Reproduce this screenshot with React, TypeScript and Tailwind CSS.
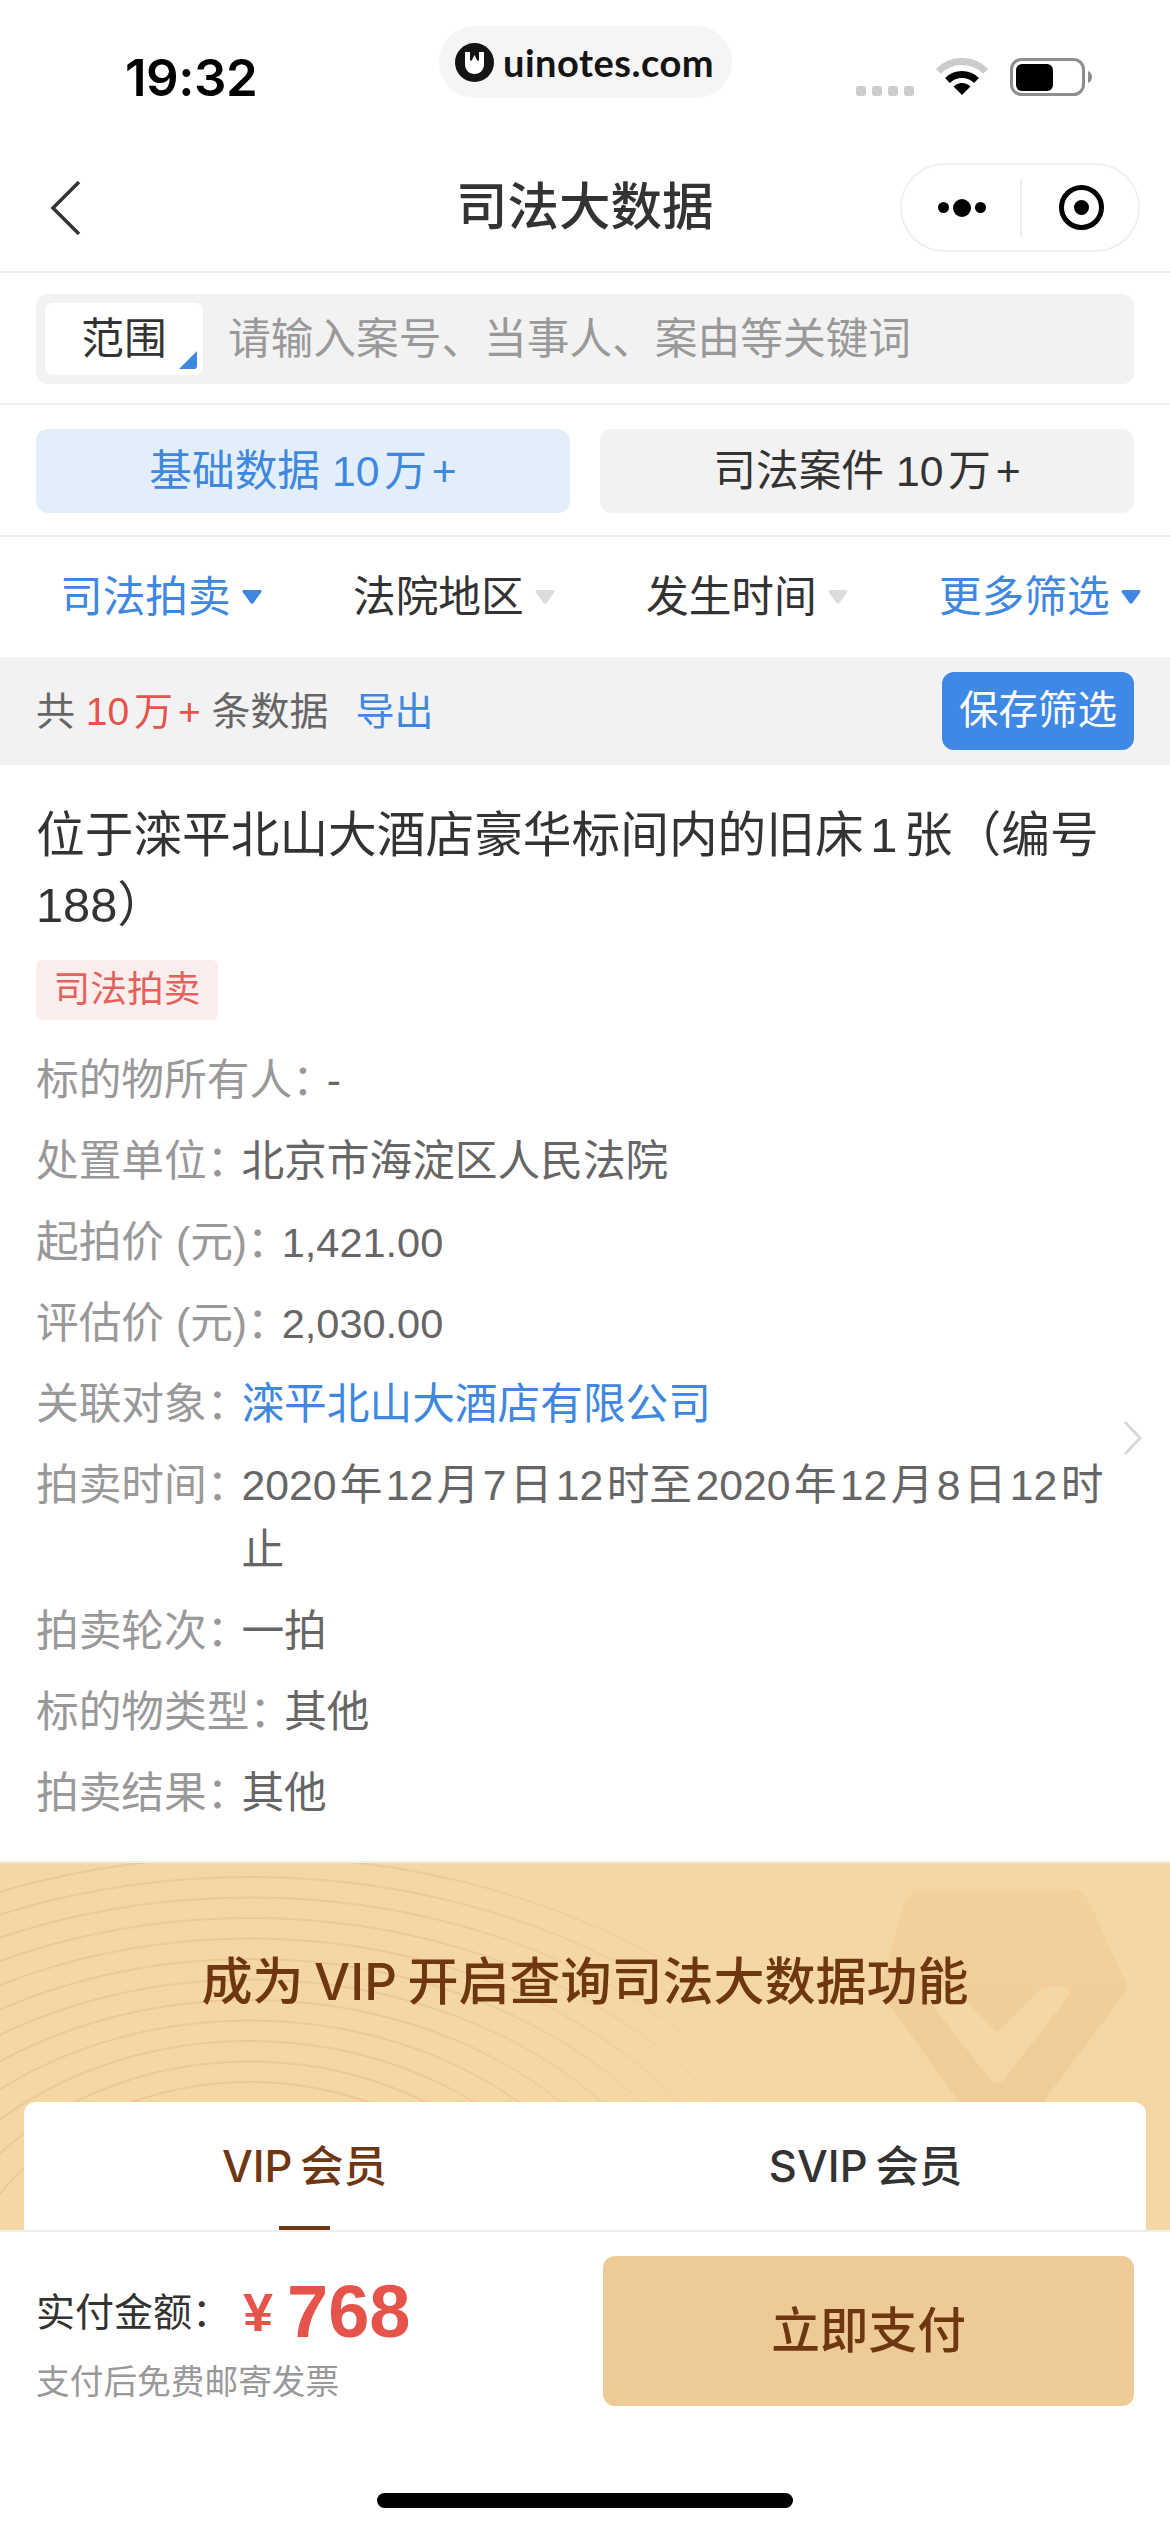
const rows: { label: string; value: string; blue?: boolean; tight?: boolean; price?: boolean }[] = [
  { label: '标的物所有人', value: '-' },
  { label: '处置单位', value: '北京市海淀区人民法院' },
  { label: '起拍价 (元)', value: '1,421.00', price: true },
  { label: '评估价 (元)', value: '2,030.00', price: true },
  { label: '关联对象', value: '滦平北山大酒店有限公司', blue: true },
  { label: '拍卖时间', value: '2020 年 12 月 7 日 12 时至 2020 年 12 月 8 日 12 时止', tight: true },
  { label: '拍卖轮次', value: '一拍' },
  { label: '标的物类型', value: '其他' },
  { label: '拍卖结果', value: '其他' },
]

const filters = [
  { name: '司法拍卖', active: true },
  { name: '法院地区', active: false },
  { name: '发生时间', active: false },
  { name: '更多筛选', active: true },
]

// wood-grain lines behind the VIP heading, flatter toward the top
const rings = Array.from({ length: 12 }, (_, i) => {
  const ry = 250 + i * 20.5
  return { ry, rx: 300 + (ry - 250) * 1.6 }
})

function Wifi() {
  return (
    <svg width="52" height="38" viewBox="0 0 52 38">
      <path d="M2.3 13.3A33.5 33.5 0 0 1 49.7 13.3" fill="none" stroke="#cccccc" strokeWidth="7" />
      <path d="M11.5 22.5A20.5 20.5 0 0 1 40.5 22.5" fill="none" stroke="#000" strokeWidth="7" />
      <path d="M26 37L17.5 28.5A12 12 0 0 1 34.5 28.5Z" fill="#000" />
    </svg>
  )
}

function Battery() {
  return (
    <svg width="83" height="38" viewBox="0 0 83 38">
      <rect x="1.5" y="1.5" width="72" height="35" rx="10" fill="none" stroke="#8e8e8e" strokeWidth="3" />
      <rect x="6" y="6" width="37" height="27" rx="6" fill="#000" />
      <path d="M78 13C81 14 82 16.500 82 19C82 21.500 81 24 78 25Z" fill="#8e8e8e" />
    </svg>
  )
}

function Logo() {
  return (
    <svg width="39" height="39" viewBox="0 0 39 39">
      <circle cx="19.500" cy="19.500" r="19.500" fill="#141414" />
      <path d="M10 9H15V17C15 18 16.500 18 17 17L19.500 12L22 17C22.500 18 24 18 24 17V9H29V21C29 27 25 31 19.500 31C14 31 10 27 10 21Z" fill="#fff" />
    </svg>
  )
}

function Triangle({ active }: { active: boolean }) {
  return (
    <svg className="shrink-0" width="20" height="14" viewBox="0 0 20 14">
      <path d="M2 0H18C19.500 0 20 1 19.200 2.200L11.500 13C10.700 14 9.300 14 8.500 13L0.800 2.200C0 1 0.500 0 2 0Z" fill={active ? '#4087e0' : '#dcdcdc'} />
    </svg>
  )
}

export default function App() {
  return (
    <div className="w-[1170px] h-[2532px] flex flex-col overflow-hidden bg-white font-['Liberation_Sans','Noto_Sans_CJK_SC',sans-serif] text-[#333333]">
      <div className="h-[144px] flex items-start shrink-0">
        <div className="w-[439px] pl-[125px] pt-[50px] font-['Inter'] text-[51px] leading-[56px] font-semibold tracking-[-0.5px] text-black">19:32</div>
        <div className="mt-[26px] w-[293px] h-[72px] rounded-[36px] bg-[#f5f5f5] flex items-center pl-[16px] gap-[9px]">
          <Logo />
          <span className="font-['Lato'] text-[38px] font-bold leading-none text-[#141414] tracking-[0.5px]">uinotes.com</span>
        </div>
        <div className="flex items-end pt-[58px] pl-[124px]">
          <div className="flex gap-[6px]">
            {[0, 1, 2, 3].map(i => <div key={i} className="w-[10px] h-[10px] rounded-[3px] bg-[#cccccc]" />)}
          </div>
          <div className="ml-[22px]"><Wifi /></div>
          <div className="ml-[22px]"><Battery /></div>
        </div>
      </div>

      <div className="h-[129px] shrink-0 border-b-2 border-[#eeeeee] flex items-center pl-[48px] pr-[30px]">
        <svg width="34" height="56" viewBox="0 0 34 56">
          <path d="M31 2L5 28L31 54" fill="none" stroke="#333" strokeWidth="3.500" />
        </svg>
        <h1 className="ml-[374px] text-[51.500px] leading-none font-medium text-[#333333]">司法大数据</h1>
        <div className="ml-auto w-[240px] h-[89px] rounded-[45px] border-2 border-[#f0f0f0] flex items-center">
          <div className="w-[120px] h-[60px] border-r-2 border-[#f0f0f0] flex items-center justify-center gap-[4px] pl-[2px]">
            <div className="w-[11px] h-[11px] rounded-full bg-black" />
            <div className="w-[18px] h-[18px] rounded-full bg-black" />
            <div className="w-[11px] h-[11px] rounded-full bg-black" />
          </div>
          <div className="flex-1 flex items-center justify-center pl-[2px]">
            <div className="w-[45px] h-[45px] rounded-full border-[5px] border-black flex items-center justify-center">
              <div className="w-[15px] h-[15px] rounded-full bg-black" />
            </div>
          </div>
        </div>
      </div>

      <div className="shrink-0 px-[36px] pt-[21px] pb-[19px] border-b-2 border-[#eeeeee]">
        <div className="h-[90px] rounded-[12px] bg-[#f2f2f2] flex items-center pl-[9px]">
          <div className="relative w-[158px] h-[72px] rounded-[8px] bg-white flex items-center justify-center text-[42.700px] leading-none text-[#333333]">
            范围
            <svg className="absolute right-[6px] bottom-[6px]" width="18" height="18" viewBox="0 0 18 18">
              <path d="M18 0V15C18 17 17 18 15 18H0Z" fill="#4087e0" />
            </svg>
          </div>
          <span className="ml-[25px] text-[42.700px] leading-none text-[#999999]">请输入案号、当事人、案由等关键词</span>
        </div>
      </div>

      <div className="shrink-0 px-[36px] pt-[24px] pb-[22px] border-b-2 border-[#eeeeee] grid grid-cols-2 gap-[30px]">
        <div className="h-[84px] rounded-[12px] bg-[#e2effa] text-[#4087e0] flex items-center justify-center text-[42.700px] leading-none">
          <span>基础数据 <span className="[word-spacing:-7px]">10 万 +</span></span>
        </div>
        <div className="h-[84px] rounded-[12px] bg-[#f2f2f2] text-[#333333] flex items-center justify-center text-[42.700px] leading-none">
          <span>司法案件 <span className="[word-spacing:-7px]">10 万 +</span></span>
        </div>
      </div>

      <div className="h-[120px] shrink-0 flex items-center pl-[60px] gap-[90px]">
        {filters.map(f => (
          <div key={f.name} className={`flex items-center gap-[11px] w-[203px] shrink-0 text-[42.700px] leading-none whitespace-nowrap ${f.active ? 'text-[#4087e0]' : 'text-[#333333]'}`}>
            <span>{f.name}</span>
            <Triangle active={f.active} />
          </div>
        ))}
      </div>

      <div className="h-[108px] shrink-0 bg-[#f2f2f2] flex items-center justify-between pl-[36px] pr-[36px]">
        <div className="text-[39px] leading-none text-[#666666]">
          共 <span className="text-[#e5534b] [word-spacing:-6px]">10 万 +</span> 条数据
          <span className="text-[#4087e0] ml-[27px]">导出</span>
        </div>
        <div className="w-[192px] h-[78px] rounded-[12px] bg-[#4088e5] text-white text-[39.500px] leading-none flex items-center justify-center">保存筛选</div>
      </div>

      <div className="flex-1 min-h-0 overflow-hidden">
        <div className="relative px-[36px] pt-[35px] pb-[35px]">
          <h2 className="text-[48.700px] leading-[70px] text-[#333333] font-normal [word-spacing:-7px]">位于滦平北山大酒店豪华标间内的旧床 1 张（编号188）</h2>
          <div className="mt-[20px] w-[182px] h-[60px] rounded-[6px] bg-[#fdeeee] text-[#e5625c] text-[36.700px] leading-none flex items-center justify-center">司法拍卖</div>
          <div className="mt-[28px] flex flex-col gap-[16px]">
            {rows.map(r => (
              <div key={r.label} className="flex text-[42.700px] leading-[65px]">
                <span className="shrink-0 text-[#999999] whitespace-nowrap">{r.label}<span className="tracking-[-8px]">：</span></span>
                <span className={`${r.blue ? 'text-[#4087e0]' : 'text-[#666666]'} ${r.tight ? '[word-spacing:-8.500px]' : ''} ${r.price ? 'text-[41.500px]' : ''}`}>{r.value}</span>
              </div>
            ))}
          </div>
          <svg className="absolute right-[27px] top-[655px]" width="20" height="36" viewBox="0 0 20 36">
            <path d="M2 2L17 18L2 34" fill="none" stroke="#d8d8d8" strokeWidth="3" />
          </svg>
        </div>

        <div className="relative border-t-2 border-[#eeeeee] bg-[#f5d6a5] pt-[84px] pb-[40px] overflow-hidden">
          <svg className="absolute left-0 top-0" width="1170" height="500" viewBox="0 0 1170 500">
            <defs>
              <linearGradient id="ringFade" gradientUnits="userSpaceOnUse" x1="420" y1="0" x2="770" y2="0">
                <stop offset="0" stopColor="#e8c08a" stopOpacity="0.6" />
                <stop offset="1" stopColor="#e8c08a" stopOpacity="0" />
              </linearGradient>
              <linearGradient id="shieldFade" x1="0" y1="0" x2="0" y2="1">
                <stop offset="0" stopColor="#f3d19d" />
                <stop offset="0.6" stopColor="#f0cc98" />
              </linearGradient>
            </defs>
            {rings.map(r => (
              <ellipse key={r.ry} cx="250" cy="469" rx={r.rx} ry={r.ry} fill="none" stroke="url(#ringFade)" strokeWidth="2" />
            ))}
            <path d="M925 26H1068C1078 26 1084 30 1089 38L1122 112C1128 120 1128 126 1122 134L1012 280C1005 290 995 290 988 280L884 134C878 126 878 120 884 112L905 38C910 30 915 26 925 26Z" fill="url(#shieldFade)" />
            <path d="M1043 124H1062Q1074 124 1068 134L1006 214Q997 226 988 214L926 134Q920 124 932 124H951L997 169Z" fill="#f5d6a5" />
          </svg>
          <h3 className="relative text-center font-['Inter','Noto_Sans_CJK_SC',sans-serif] text-[51px] leading-[70px] font-medium text-[#6e3712] [word-spacing:-3px]">成为 VIP 开启查询司法大数据功能</h3>
          <div className="relative mx-[24px] mt-[85px] h-[260px] rounded-[12px] bg-white grid grid-cols-2">
            <div className="flex flex-col items-center pt-[34px]">
              <span className="font-['Inter','Noto_Sans_CJK_SC',sans-serif] text-[43.500px] leading-[60px] font-medium text-[#6e3712] [word-spacing:-4px]">VIP 会员</span>
              <div className="mt-[30px] w-[51px] h-[6px] bg-[#6e3712]" />
            </div>
            <div className="flex flex-col items-center pt-[34px]">
              <span className="font-['Inter','Noto_Sans_CJK_SC',sans-serif] text-[43.500px] leading-[60px] font-medium text-[#333333] [word-spacing:-4px]">SVIP 会员</span>
            </div>
          </div>
        </div>
      </div>

      <div className="shrink-0 border-t-2 border-[#eeeeee] bg-white px-[36px] pt-[24px] pb-[24px]">
        <div className="flex justify-between">
          <div className="flex flex-col">
            <div className="mt-[21px] h-[70px] flex items-center">
              <span className="text-[39px] leading-none text-[#333333]">实付金额：</span>
              <span className="ml-[12px] text-[54px] leading-none font-bold text-[#e5534b]">¥</span>
              <span className="ml-[14px] text-[74px] leading-none font-bold text-[#e5534b]">768</span>
            </div>
            <div className="mt-[15px] text-[33.700px] leading-[40px] text-[#999999]">支付后免费邮寄发票</div>
          </div>
          <div className="w-[531px] h-[150px] rounded-[12px] bg-[#edca96] flex items-center justify-center text-[48.700px] leading-none font-medium text-[#6e3712]">立即支付</div>
        </div>
        <div className="mt-[87px] mx-auto w-[416px] h-[15px] rounded-full bg-black" />
      </div>
    </div>
  )
}
